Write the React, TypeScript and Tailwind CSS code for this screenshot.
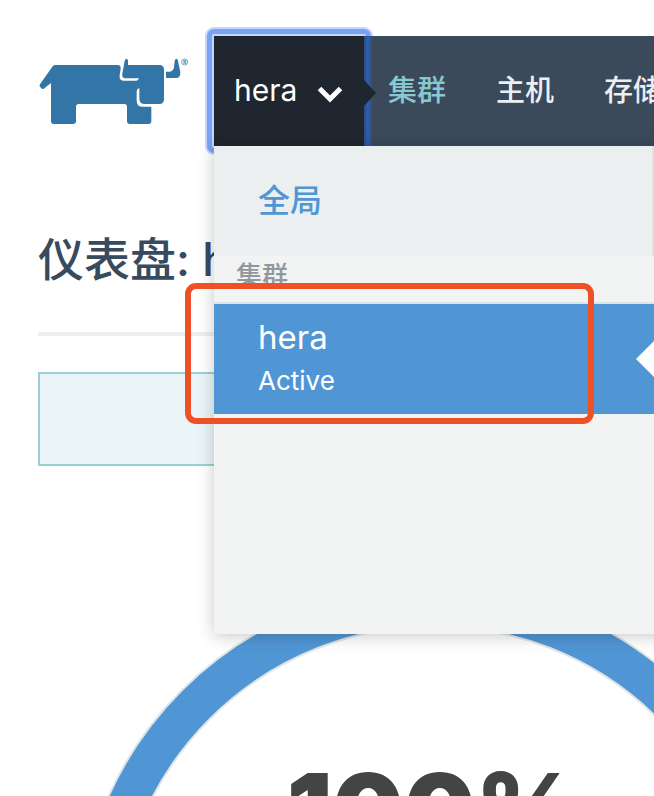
import React from "react";

const navLinks = [
  { label: "集群", active: true },
  { label: "主机", active: false },
  { label: "存储", active: false },
];

function Logo() {
  return (
    <svg viewBox="54 51 456 204" className="h-[68px] w-[152px]" role="img" aria-label="Rancher">
      <g fill="#3375a7">
        <path d="M105 75H293Q303 75 302 86L299 106Q297 122 310 122H350Q355 121 357 115H318Q305 115 307 101L314 62Q316 56 320 56Q324 57 324 63V75H418Q432 75 432 89V178Q432 192 418 192H374Q358 192 358 176V144Q350 146 350 154V182Q350 200 368 200H394V243Q394 252 385 252H330Q321 252 321 243V200Q321 192 313 192H176Q168 192 168 200V243Q168 252 159 252H102Q93 252 93 243V129L71 146Q67 149 64 145L59 139Q58 136 60 133L97 80Q100 75 105 75Z" />
        <path d="M438 95H449Q460 94 462 82L464 63Q466 56 469 56Q473 56 474 63L481 96Q482 114 468 114H438Z" />
      </g>
      <circle cx="494" cy="66" r="9" fill="none" stroke="#3375a7" strokeWidth="2" />
      <text x="494" y="71" textAnchor="middle" fontSize="14" fill="#3375a7" className="font-['Inter'] font-bold">
        R
      </text>
    </svg>
  );
}

function ClusterMenu() {
  return (
    <div className="absolute top-full -right-5 left-[214px] z-20 flex h-[488px] flex-col bg-[#f2f4f4] shadow-[0_2px_16px_rgba(0,0,0,0.22)]">
      <a href="#global" className="mr-5 flex h-[110px] items-center border-r-2 border-[#dde1e3] bg-[#ebeff0] pl-11 text-[32px] leading-10 font-medium text-[#5096d5]">
        全局
      </a>
      <h2 className="h-12 border-b-2 border-[#dce4e7] pl-[22px] text-[26px] leading-10 font-medium text-[#91989c]">集群</h2>
      <a href="#hera" className="relative flex h-[110px] flex-col justify-center bg-[#5096d5] pl-11 text-white">
        <span className="text-[33px] leading-[44px]">hera</span>
        <span className="text-[26px] leading-[44px]">Active</span>
        <svg viewBox="0 0 18 36" className="absolute top-[37px] right-5 h-9 w-[18px]" aria-hidden="true">
          <path d="M18 0V36L0 18Z" fill="#fff" />
        </svg>
      </a>
      <div aria-hidden="true" className="absolute top-[137px] left-[-29px] h-[141px] w-[409px] rounded-[11px] border-6 border-[#ef5126]" />
    </div>
  );
}

function Header() {
  return (
    <header className="relative mt-9 flex h-[110px] shrink-0 pl-[38px]">
      <a href="#home" className="mt-[21px] mr-6 h-[68px] shrink-0">
        <Logo />
      </a>
      <nav className="flex min-w-0 flex-1 items-center bg-[#3a4a5b]">
        <button type="button" aria-expanded="true" className="relative flex h-full w-[150px] shrink-0 items-center justify-between bg-[#1f2630] pr-[21px] pb-0.5 pl-5 text-[30px] leading-9 text-white">
          hera
          <svg viewBox="0 0 26 18" className="mt-2 h-[18px] w-[26px]" fill="none" stroke="#fff" strokeWidth="5" aria-hidden="true">
            <path d="M2.5 3.5L13 14L23.5 3.5" />
          </svg>
          <span aria-hidden="true" className="absolute inset-y-0 left-full w-2 bg-[#2d5cae] shadow-[inset_2px_0_1px_#2f4f84,inset_-2px_0_1px_#32527f]" />
          <svg viewBox="0 0 12 26" className="absolute top-11 left-full h-[26px] w-3" aria-hidden="true">
            <path d="M0 0L12 13L0 26Z" fill="#1f2630" />
          </svg>
        </button>
        <div className="flex gap-[50px] pl-6 text-[29px] leading-9 font-medium">
          {navLinks.map((link) => (
            <a
              key={link.label}
              href={"#" + link.label}
              className={link.active ? "shrink-0 whitespace-nowrap text-[#88c9d1]" : "shrink-0 whitespace-nowrap text-[#eceff1]"}
            >
              {link.label}
            </a>
          ))}
        </div>
      </nav>
      <div aria-hidden="true" className="absolute -inset-y-[9px] left-[205px] -z-10 w-[168px] rounded-[9px] border-2 border-[#c3d7fb] bg-[#c3d7fb]">
        <div className="h-full rounded-[7px] border-5 border-[#7aa3f5]" />
      </div>
      <ClusterMenu />
    </header>
  );
}

function Gauge() {
  return (
    <svg viewBox="0 0 716 716" className="mt-[119px] ml-[38px] h-[716px] w-[716px] shrink-0" role="img" aria-label="100%">
      <circle cx="358" cy="358" r="337" fill="none" stroke="#dfe5e6" strokeWidth="42" />
      <circle cx="358" cy="358" r="337" fill="none" stroke="#5096d5" strokeWidth="38" />
      <text x="358" y="261" textAnchor="middle" fontSize="101" fill="#444444" className="font-['Inter'] font-black">
        100%
      </text>
    </svg>
  );
}

export default function App() {
  return (
    <div className="isolate flex h-screen flex-col overflow-hidden bg-white font-['Inter','Noto_Sans_CJK_SC',sans-serif]">
      <Header />
      <main className="pl-[38px]">
        <h1 className="mt-[83px] text-[46px] leading-[60px] font-medium whitespace-nowrap text-[#384a5d]">仪表盘: hera</h1>
        <hr className="mt-[43px] border-t-4 border-[#ebeff0]" />
        <section className="mt-9 h-[94px] border-2 border-[#9bcfd4] bg-[#ebf5f7]" />
        <Gauge />
      </main>
    </div>
  );
}
